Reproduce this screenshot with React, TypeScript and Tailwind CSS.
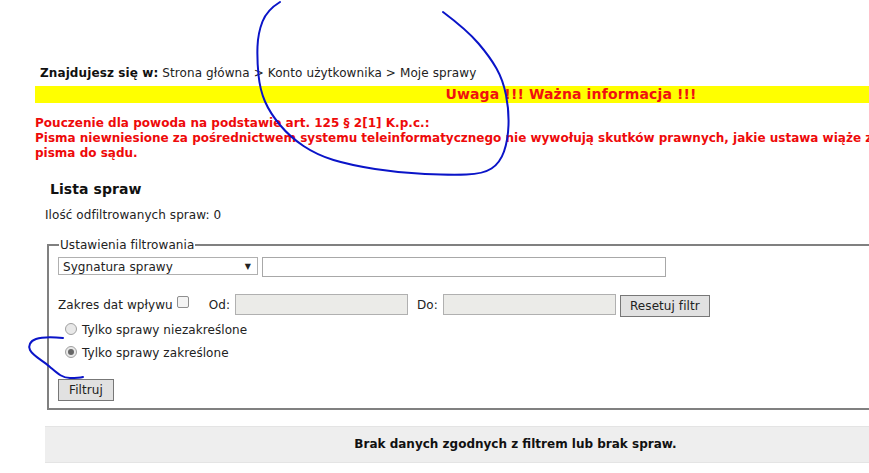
const font = { fontFamily: '"DejaVu Sans", Verdana, sans-serif' };

export default function App() {
  return (
    <div className="relative h-[473px] w-[869px] overflow-hidden bg-white text-[12px] leading-[15px] tracking-[0.07px] text-[#222]" style={font}>
      <div className="w-[1107px] pl-[35px] pt-[66px]">
        <div className="pl-[5px] text-[12px] leading-[15px] tracking-[0.1px]">
          <b className="text-[#111]">Znajdujesz się w:</b> Strona główna &gt; Konto użytkownika &gt; Moje sprawy
        </div>
        <div className="mt-[5px] bg-[#ffff00] text-center text-[14px] font-bold leading-[17px] tracking-[0.14px] text-[#f01010]">
          Uwaga !!! Ważna informacja !!!
        </div>
        <p className="mt-[13px] text-[12px] font-bold leading-[15px] tracking-normal text-[#ee0a0a]">
          <span className="tracking-[0.03px]">Pouczenie dla powoda na podstawie art. 125 § 2[1] K.p.c.:</span>
          <br />
          Pisma niewniesione za pośrednictwem systemu teleinformatycznego nie wywołują skutków prawnych, jakie ustawa wiąże z wniesieniem
          <br />
          pisma do sądu.
        </p>
        <h2 className="ml-[15px] mt-[19px] text-[14px] font-bold leading-[18px] text-[#111]">Lista spraw</h2>
        <div className="ml-[10px] mt-[10px]">Ilość odfiltrowanych spraw: 0</div>

        <fieldset className="ml-[12px] mt-[15px] h-[172px] w-[1000px] border-2 border-[#808080] pl-[9px]">
          <legend className="ml-[1px] px-[1px] leading-[14px]">Ustawienia filtrowania</legend>
          <div className="flex items-start gap-[4px] pt-[5px]">
            <div className="flex h-[18px] w-[200px] items-center justify-between border border-[#b0b0b0] pl-[4px] pr-[6px]">
              <span className="pt-[2px]">Sygnatura sprawy</span>
              <span className="text-[8px] text-[#222]">▼</span>
            </div>
            <div className="h-[20px] w-[404px] border border-[#a8a8a8]"></div>
          </div>
          <div className="mt-[17px] flex items-start">
            <span className="mt-[4px]">Zakres dat wpływu</span>
            <span className="ml-[4px] mt-[2px] h-[12px] w-[12px] rounded-[2px] border border-[#8f8f8f] bg-[#f4f4f4]"></span>
            <span className="ml-[20px] mt-[4px]">Od:</span>
            <div className="ml-[5px] h-[21px] w-[173px] border border-[#b0b0b0] bg-[#ebebe8]"></div>
            <span className="ml-[9px] mt-[4px]">Do:</span>
            <div className="ml-[5px] h-[21px] w-[173px] border border-[#b0b0b0] bg-[#ebebe8]"></div>
            <button className="ml-[4px] mt-[1px] h-[22px] w-[90px] border border-[#777] bg-[#e1e1e1] text-center text-[12px] text-[#222]">
              Resetuj filtr
            </button>
          </div>
          <div className="ml-[7px] mt-[6px] flex items-center gap-[5px]">
            <span className="mb-[3px] h-[12px] w-[12px] rounded-full border border-[#a0a0a0] bg-[#e8e8e8]"></span>
            <span>Tylko sprawy niezakreślone</span>
          </div>
          <div className="ml-[7px] mt-[8px] flex items-center gap-[5px]">
            <span className="mb-[3px] flex h-[12px] w-[12px] items-center justify-center rounded-full border border-[#a0a0a0] bg-[#e8e8e8]">
              <span className="h-[6px] w-[6px] rounded-full bg-[#666]"></span>
            </span>
            <span>Tylko sprawy zakreślone</span>
          </div>
          <button className="mt-[18px] block h-[22px] w-[56px] border border-[#777] bg-[#e1e1e1] text-center text-[12px] text-[#222]">
            Filtruj
          </button>
        </fieldset>

        <div className="ml-[10px] mt-[16px] flex h-[37px] w-[1027px] items-center justify-center border-y border-[#e4e4e4] bg-[#eeeeee] font-bold tracking-normal text-[#111]">
          <span className="mr-[86px]">Brak danych zgodnych z filtrem lub brak spraw.</span>
        </div>
      </div>

      {/* odręczne zaznaczenia */}
      <svg className="pointer-events-none absolute left-0 top-0" width="869" height="473" fill="none" stroke="#0a14c8" strokeWidth="2" strokeLinecap="round">
        <path d="M280 2 Q267 10 262.5 21.5 Q258 33 257.5 46.5 Q257 60 258.5 75 Q260 90 265 101.5 Q270 113 280 125 Q290 137 303.5 146 Q317 155 333.5 160 Q350 165 375 169 Q400 173 425 174 Q450 175 466.5 174.5 Q483 174 491.5 168.5 Q500 163 504 151.5 Q508 140 508.5 125 Q509 110 506 95 Q503 80 496.5 68.5 Q490 57 478.5 43.5 Q467 30 443 12" />
        <path d="M63 338 C52 337 42 337 36 339 C30 341 28 346 30 350 C33 356 42 360 50 367 C57 373 62 378 70 378 C75 378 79 378 83 377" />
      </svg>
    </div>
  );
}
